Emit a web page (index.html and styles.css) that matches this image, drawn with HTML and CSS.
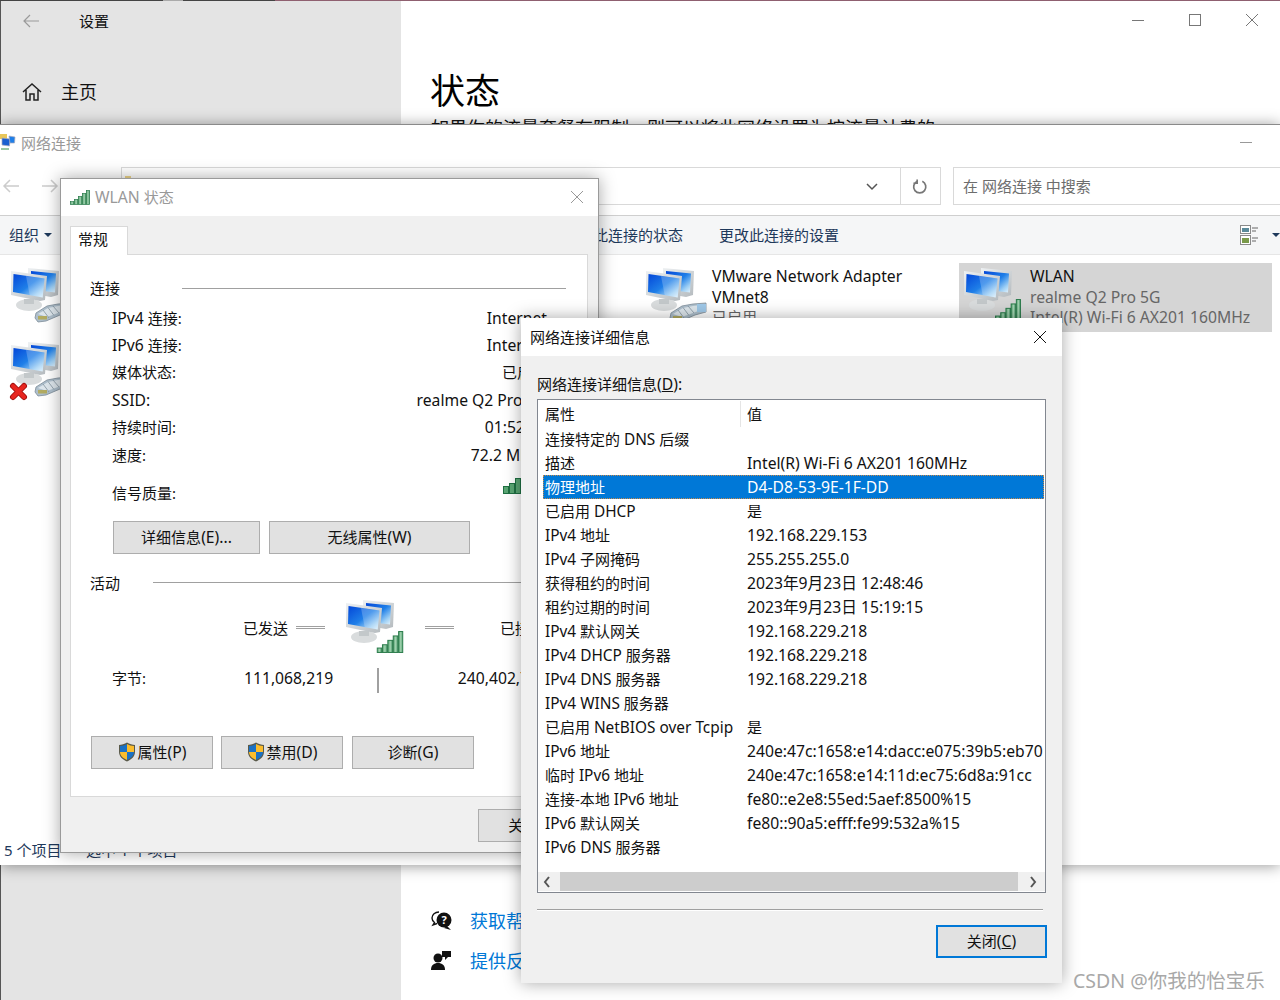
FILE: index.html
```html
<!DOCTYPE html>
<html lang="zh-CN">
<head>
<meta charset="utf-8">
<title>网络连接详细信息</title>
<link rel="stylesheet" href="styles.css">
</head>
<body>
<svg class="defs" aria-hidden="true">
  <defs>
    <linearGradient id="gScreen" x1="0" y1="0" x2="1" y2="1">
      <stop offset="0" stop-color="#0346d8"/><stop offset=".5" stop-color="#1f7fe8"/><stop offset=".8" stop-color="#9fd0f5"/><stop offset="1" stop-color="#e4f3fc"/>
    </linearGradient>
    <linearGradient id="gFrame" x1="0" y1="0" x2="1" y2="1">
      <stop offset="0" stop-color="#eef1f3"/><stop offset="1" stop-color="#b4babe"/>
    </linearGradient>
    <linearGradient id="gBar" x1="0" y1="0" x2="1" y2="0">
      <stop offset="0" stop-color="#4f9e6b"/><stop offset=".5" stop-color="#a4d4b2"/><stop offset="1" stop-color="#3f9160"/>
    </linearGradient>
    <symbol id="monitors" viewBox="0 0 60 56">
      <ellipse cx="18" cy="37" rx="13" ry="6" fill="#d9dcdd"/>
      <path d="M13 31h10v5H13z" fill="#c3c8ca"/>
      <path d="M17 0 48 3l-1 24-7 2-23-4z" fill="url(#gFrame)"/>
      <path d="M20 3 45 5.500l-1 19-24-3z" fill="url(#gScreen)"/>
      <path d="M0 3 36 8l-2 24-5 1L0 27z" fill="url(#gFrame)"/>
      <path d="M2.500 6 33.500 10.500l-1.800 19L2 24z" fill="url(#gScreen)"/>
      <path d="M15 8 33.500 10.500l-1.800 19-13-2.300z" fill="#fff" opacity=".22"/>
    </symbol>
    <symbol id="cable" viewBox="0 0 36 19" overflow="visible">
      <path d="M1 10 12 3l11-2 13-1v9L25 12 11 18 3 19 0 15z" fill="#aebfcc" stroke="#7c8c98" stroke-width=".8"/>
      <path d="M3 11 13 5l10-2 4-.5v6L12 14z" fill="#dde6ec"/>
      <path d="M8 7l6 8M13 4.500l6 8M18 3l6 7" stroke="#8494a0" stroke-width=".8" fill="none"/>
      <path d="M27 1h9v8h-9z" fill="#9fc8e8"/>
      <path d="M3 13h9v3.500H3z" fill="#b3ac62"/>
    </symbol>
    <symbol id="signal" viewBox="0 0 25 20" preserveAspectRatio="none">
      <g fill="url(#gBar)" stroke="#2a7a4a" stroke-width=".9">
        <rect x=".5" y="15.500" width="4.500" height="4"/>
        <rect x="5.500" y="12.500" width="4.500" height="7"/>
        <rect x="10.500" y="8.500" width="4.500" height="11"/>
        <rect x="15.500" y="4.500" width="4.500" height="15"/>
        <rect x="20.500" y=".5" width="4" height="19"/>
      </g>
    </symbol>
    <symbol id="shield" viewBox="0 0 18 20">
      <path d="M9 .5C6.500 2 3.500 3 1 3v7c0 4.500 3.500 7.500 8 9.500 4.500-2 8-5 8-9.500V3C14.500 3 11.500 2 9 .5z" fill="#5a5a4a"/>
      <path d="M9 2v8H2V4c2.500 0 5-1 7-2z" fill="#1b71c4"/>
      <path d="M9 2c2 1 4.500 2 7 2v6H9z" fill="#fbbd2c"/>
      <path d="M2 10h7v8c-4-1.800-7-4.300-7-8z" fill="#fbbd2c"/>
      <path d="M9 10h7c0 3.700-3 6.200-7 8z" fill="#1b71c4"/>
    </symbol>
  </defs>
</svg>

<main class="desk">
  <div class="strip"></div>

  <section class="win settings">
    <aside class="side">
      <div class="side-head">
        <svg class="ico-back" viewBox="0 0 16 14"><path d="M7 1 1 7l6 6M1 7h15" fill="none" stroke="#9a9a9a" stroke-width="1.200"/></svg>
        <span>设置</span>
      </div>
      <div class="side-home">
        <svg class="ico-home" viewBox="0 0 20 20"><path d="M1 10 10 2l9 8M4 8v10h4v-6h4v6h4V8" fill="none" stroke="#222" stroke-width="1.500"/></svg>
        <span>主页</span>
      </div>
    </aside>
    <div class="pane">
      <div class="caption-btns">
        <i class="cap-min"></i><i class="cap-max"></i>
        <svg class="cap-x" viewBox="0 0 12 12"><path d="M0 0 12 12M12 0 0 12" stroke="#777" fill="none"/></svg>
      </div>
      <h1>状态</h1>
      <p class="clip-text">如果你的流量套餐有限制，则可以将此网络设置为按流量计费的</p>
      <ul class="help">
        <li>
          <svg class="ico-help" viewBox="0 0 22 20"><path d="M8 1C4 1 1 3.500 1 7c0 2 1 3.500 2.500 4.500L2 14l4-1.500" fill="none" stroke="#111" stroke-width="1.400"/><circle cx="13" cy="9" r="7.500" fill="#111"/><path d="M16 15l4 4-7-2z" fill="#111"/><text x="13" y="13" text-anchor="middle" class="qmark">?</text></svg>
          <a>获取帮助</a>
        </li>
        <li>
          <svg class="ico-help" viewBox="0 0 22 20"><circle cx="7" cy="7" r="4.500" fill="#111"/><path d="M0 19c0-5 3-7 7-7s7 2 7 7z" fill="#111"/><path d="M11 0h9v6h-3l-3 3V6h-3z" fill="#111"/></svg>
          <a>提供反馈</a>
        </li>
      </ul>
    </div>
  </section>

  <section class="win net">
    <header class="net-title">
      <svg class="ico-net-small" viewBox="0 0 17 17"><path d="M0 0h7v5H0z" fill="#e8c65a"/><path d="M2 4l8 1-.5 7L2 11z" fill="#1a5fd0" stroke="#aab" stroke-width=".7"/><path d="M9 2l6 1-.5 6H10z" fill="#1f7fe8" stroke="#aab" stroke-width=".7"/><path d="M1 14h8v2H1z" fill="#9ac7a4"/></svg>
      <span>网络连接</span>
      <i class="net-min"></i>
    </header>
    <div class="net-nav">
      <svg class="nav-arrow" viewBox="0 0 16 14"><path d="M7 1 1 7l6 6M1 7h15" fill="none" stroke="#ccc" stroke-width="1.500"/></svg>
      <svg class="nav-arrow fwd" viewBox="0 0 16 14"><path d="M9 1l6 6-6 6M15 7H0" fill="none" stroke="#ccc" stroke-width="1.500"/></svg>
      <div class="addr">
        <i class="folder"></i>
        <svg class="chev" viewBox="0 0 12 7"><path d="M1 1l5 5 5-5" fill="none" stroke="#555" stroke-width="1.500"/></svg>
      </div>
      <div class="refresh">
        <svg viewBox="0 0 16 16"><path d="M5.500 2.500A6.500 6.500 0 1 0 11 2.500M5.500 .5v4h-4" fill="none" stroke="#777" stroke-width="1.800"/></svg>
      </div>
      <div class="search">在 网络连接 中搜索</div>
    </div>
    <div class="toolbar">
      <span class="tool org">组织</span><i class="tri"></i>
      <span class="tool view-state">查看此连接的状态</span>
      <span class="tool">更改此连接的设置</span>
      <svg class="ico-view" viewBox="0 0 18 20">
        <rect x=".5" y=".5" width="10" height="8" fill="#fff" stroke="#8a8a8a"/><rect x="2" y="3" width="7" height="4" fill="#5a8a9a"/><path d="M12 3h6M12 13h6M12 16h4M12 6h4" stroke="#666"/>
        <rect x=".5" y="10.500" width="10" height="9" fill="#fff" stroke="#8a8a8a"/><rect x="2" y="13" width="7" height="5" fill="#7a9a4a"/>
      </svg>
      <i class="tri tri-end"></i>
    </div>
    <div class="items">
      <div class="col-first">
        <div class="item">
          <svg class="ico-net" viewBox="0 0 60 56"><use href="#monitors"/><use href="#cable" x="24" y="35" width="36" height="19"/></svg>
        </div>
        <div class="item">
          <svg class="ico-net" viewBox="0 0 60 56"><use href="#monitors"/><use href="#cable" x="24" y="35" width="36" height="19"/><path d="M2 44l11 11M13 44 2 55" stroke="#a51210" stroke-width="6" stroke-linecap="round"/><path d="M2 44l11 11M13 44 2 55" stroke="#e8251f" stroke-width="4" stroke-linecap="round"/></svg>
        </div>
      </div>
      <div class="item item-wide">
        <svg class="ico-net" viewBox="0 0 60 56"><use href="#monitors"/><use href="#cable" x="24" y="35" width="36" height="19"/></svg>
        <div class="item-text">
          <div class="l">VMware Network Adapter</div>
          <div class="l">VMnet8</div>
          <div class="dim">已启用</div>
        </div>
      </div>
      <div class="item item-wide selected">
        <svg class="ico-net" viewBox="0 0 60 56"><use href="#monitors"/><use href="#signal" x="31" y="31" width="26" height="22"/></svg>
        <div class="item-text">
          <div class="l">WLAN</div>
          <div class="dim l">realme Q2 Pro 5G</div>
          <div class="dim l">Intel(R) Wi-Fi 6 AX201 160MHz</div>
        </div>
      </div>
    </div>
    <footer class="status"><span class="count">5 个项目</span><span>选中 1 个项目</span></footer>
  </section>

  <section class="win dlg wlan">
    <header class="dlg-title">
      <svg class="ico-title" viewBox="0 0 25 20" preserveAspectRatio="none"><use href="#signal"/></svg>
      <span class="dim-title"><span class="l">WLAN</span> 状态</span>
      <svg class="dlg-x" viewBox="0 0 12 12"><path d="M0 0 12 12M12 0 0 12" stroke="#999" fill="none"/></svg>
    </header>
    <div class="dlg-body">
      <div class="tab">常规</div>
      <div class="panel">
        <div class="group g1"><span class="group-name wide">连接</span><i class="rule"></i></div>
        <dl class="rows">
          <div class="row"><dt><span class="l">IPv4</span> 连接:</dt><dd class="l">Internet</dd></div>
          <div class="row"><dt><span class="l">IPv6</span> 连接:</dt><dd class="l">Internet</dd></div>
          <div class="row"><dt>媒体状态:</dt><dd>已启用</dd></div>
          <div class="row"><dt class="l">SSID:</dt><dd class="l">realme Q2 Pro 5G</dd></div>
          <div class="row"><dt>持续时间:</dt><dd class="l">01:52:36</dd></div>
          <div class="row"><dt>速度:</dt><dd class="l">72.2 Mbps</dd></div>
          <div class="row sig"><dt>信号质量:</dt><dd><svg class="ico-quality" viewBox="0 0 18 16"><g fill="#5aa673" stroke="#1f6f42"><rect x=".5" y="8.500" width="5" height="7"/><rect x="6.500" y="5.500" width="5" height="10"/><rect x="12.500" y=".5" width="5" height="15"/></g></svg></dd></div>
        </dl>
        <div class="btn-row">
          <button class="btn b-detail">详细信息<span class="l">(E)...</span></button>
          <button class="btn b-wireless">无线属性<span class="l">(W)</span></button>
        </div>
        <div class="group g2"><span class="group-name">活动</span><i class="rule"></i></div>
        <div class="act">
          <span>已发送</span><i class="dash"></i>
          <svg class="ico-net act-ico" viewBox="0 0 60 56"><use href="#monitors"/><use href="#signal" x="30.500" y="31" width="27" height="22"/></svg>
          <i class="dash"></i><span class="recv">已接收</span>
        </div>
        <div class="bytes">
          <span class="bytes-name">字节:</span><span class="bytes-sent l">111,068,219</span><i class="vbar"></i><span class="recv l">240,402,715</span>
        </div>
        <div class="btn-row bottom">
          <button class="btn b-act"><svg class="ico-shield" viewBox="0 0 18 20"><use href="#shield"/></svg>属性<span class="l">(P)</span></button>
          <button class="btn b-act"><svg class="ico-shield" viewBox="0 0 18 20"><use href="#shield"/></svg>禁用<span class="l">(D)</span></button>
          <button class="btn b-act b-last">诊断<span class="l">(G)</span></button>
        </div>
      </div>
      <div class="dlg-foot"><button class="btn b-close">关闭<span class="l">(C)</span></button></div>
    </div>
  </section>

  <section class="win dlg details">
    <header class="dlg-title det-title">
      <span>网络连接详细信息</span>
      <svg class="dlg-x" viewBox="0 0 12 12"><path d="M0 0 12 12M12 0 0 12" stroke="#111" fill="none"/></svg>
    </header>
    <div class="det-body">
      <div class="det-label">网络连接详细信息<span class="l">(<u>D</u>):</span></div>
      <div class="listbox">
        <div class="list-head"><span class="cell-name">属性</span><i class="head-sep"></i><span>值</span></div>
        <div class="list-rows">
          <div class="lr"><span class="cell-name">连接特定的 <span class="l">DNS</span> 后缀</span><span></span></div>
          <div class="lr"><span class="cell-name">描述</span><span class="l">Intel(R) Wi-Fi 6 AX201 160MHz</span></div>
          <div class="lr sel"><span class="cell-name">物理地址</span><span class="l">D4-D8-53-9E-1F-DD</span></div>
          <div class="lr"><span class="cell-name">已启用 <span class="l">DHCP</span></span><span>是</span></div>
          <div class="lr"><span class="cell-name"><span class="l">IPv4</span> 地址</span><span class="l">192.168.229.153</span></div>
          <div class="lr"><span class="cell-name"><span class="l">IPv4</span> 子网掩码</span><span class="l">255.255.255.0</span></div>
          <div class="lr"><span class="cell-name">获得租约的时间</span><span class="l">2023年9月23日 12:48:46</span></div>
          <div class="lr"><span class="cell-name">租约过期的时间</span><span class="l">2023年9月23日 15:19:15</span></div>
          <div class="lr"><span class="cell-name"><span class="l">IPv4</span> 默认网关</span><span class="l">192.168.229.218</span></div>
          <div class="lr"><span class="cell-name"><span class="l">IPv4 DHCP</span> 服务器</span><span class="l">192.168.229.218</span></div>
          <div class="lr"><span class="cell-name"><span class="l">IPv4 DNS</span> 服务器</span><span class="l">192.168.229.218</span></div>
          <div class="lr"><span class="cell-name"><span class="l">IPv4 WINS</span> 服务器</span><span></span></div>
          <div class="lr"><span class="cell-name">已启用 <span class="l">NetBIOS over Tcpip</span></span><span>是</span></div>
          <div class="lr"><span class="cell-name"><span class="l">IPv6</span> 地址</span><span class="l">240e:47c:1658:e14:dacc:e075:39b5:eb70</span></div>
          <div class="lr"><span class="cell-name">临时 <span class="l">IPv6</span> 地址</span><span class="l">240e:47c:1658:e14:11d:ec75:6d8a:91cc</span></div>
          <div class="lr"><span class="cell-name">连接-本地 <span class="l">IPv6</span> 地址</span><span class="l">fe80::e2e8:55ed:5aef:8500%15</span></div>
          <div class="lr"><span class="cell-name"><span class="l">IPv6</span> 默认网关</span><span class="l">fe80::90a5:efff:fe99:532a%15</span></div>
          <div class="lr"><span class="cell-name"><span class="l">IPv6 DNS</span> 服务器</span><span></span></div>
        </div>
        <div class="hscroll">
          <svg class="sb-arrow" viewBox="0 0 8 12"><path d="M6 1 2 6l4 5" fill="none" stroke="#555" stroke-width="2"/></svg>
          <i class="sb-thumb"></i>
          <svg class="sb-arrow" viewBox="0 0 8 12"><path d="M2 1l4 5-4 5" fill="none" stroke="#555" stroke-width="2"/></svg>
        </div>
      </div>
      <div class="det-sep"></div>
      <div class="det-foot"><button class="btn b-default">关闭<span class="l">(<u>C</u>)</span></button></div>
    </div>
  </section>

  <div class="watermark">CSDN @你我的怡宝乐</div>
</main>
</body>
</html>
```
FILE: styles.css
```css
* { box-sizing: border-box; }
html, body { margin: 0; padding: 0; background: #fff; }
body {
  width: 1280px;
  height: 1000px;
  overflow: hidden;
  font: 15px/20px "Noto Sans", "Noto Sans CJK SC", sans-serif;
  color: #111;
}
.l { font-size: 15.700px; }
.cell-name .l { font-size: 15.400px; }
.defs { position: absolute; width: 0; height: 0; }
i { display: block; font-style: normal; }
svg { display: block; overflow: visible; flex: none; }

.desk { position: relative; width: 1280px; height: 1000px; overflow: hidden; }
.strip {
  position: absolute; left: 0; top: 0; width: 1280px; height: 1px; z-index: 9;
  background: linear-gradient(90deg, #444 0 163px, #aaa 163px 183px, #444 183px 275px, #8f6070 275px);
}
.win { position: absolute; }

/* settings */
.settings { left: 0; top: 0; width: 1280px; height: 1000px; display: flex; background: #fff; z-index: 1; }
.side { width: 401px; background: #e4e4e4; border-left: 1px solid #555; padding-top: 1px; }
.side-head { display: flex; align-items: center; height: 40px; padding-left: 22px; }
.ico-back { width: 16px; height: 14px; margin-right: 40px; }
.side-home { display: flex; align-items: center; margin-top: 31px; height: 40px; padding-left: 21px; font-size: 18px; }
.ico-home { width: 20px; height: 20px; margin-right: 19px; }
.pane { flex: 1; position: relative; padding-left: 30px; }
.caption-btns { display: flex; align-items: center; justify-content: flex-end; height: 40px; padding-right: 22px; }
.cap-min { width: 12px; height: 1px; background: #777; margin-right: 45px; }
.cap-max { width: 12px; height: 12px; border: 1px solid #777; margin-right: 45px; }
.cap-x { width: 12px; height: 12px; }
h1 { margin: 26px 0 0 -1px; font-size: 35px; font-weight: 400; line-height: 50px; color: #000; }
.clip-text { margin: 0; font-size: 18px; line-height: 24px; white-space: nowrap; color: #111; }
.help { list-style: none; margin: 0; padding: 0; position: absolute; left: 30px; top: 901px; }
.help li { display: flex; align-items: center; height: 40px; }
.ico-help { width: 22px; height: 20px; margin-right: 17px; }
.help a { color: #0078d7; font-size: 18px; }
.qmark { font: 700 11px "Noto Sans", sans-serif; fill: #fff; }

/* network connections window */
.net {
  left: 0; top: 124px; width: 1280px; height: 741px; background: #fff; z-index: 2;
  border-top: 1px solid #8a8a8a; display: flex; flex-direction: column;
  box-shadow: 0 1px 14px rgba(0,0,0,.4);
}
.net-title { display: flex; align-items: center; height: 42px; padding-bottom: 7px; color: #999; }
.ico-net-small { width: 17px; height: 17px; margin-right: 4px; }
.net-min { width: 12px; height: 1px; background: #999; margin-left: auto; margin-right: 28px; }
.net-nav { display: flex; align-items: center; height: 38px; }
.nav-arrow { width: 16px; height: 14px; margin-left: 3px; }
.nav-arrow.fwd { margin-left: 23px; margin-right: 63px; }
.addr { width: 779px; height: 38px; border: 1px solid #d9d9d9; border-right: 0; display: flex; align-items: center; position: relative; }
.folder { position: absolute; left: 3px; top: 8px; width: 6px; height: 6px; background: #eed58a; }
.chev { width: 12px; height: 7px; margin-left: auto; margin-right: 22px; }
.refresh { width: 41px; height: 38px; padding-right: 2px; border: 1px solid #d9d9d9; display: flex; align-items: center; justify-content: center; }
.refresh svg { width: 15px; height: 15px; }
.search { flex: 1; height: 38px; margin-left: 12px; border: 1px solid #d9d9d9; border-right: 0; padding-left: 9px; line-height: 36px; color: #6d6d6d; }
.toolbar {
  display: flex; align-items: center; height: 40px; margin-top: 10px; padding-left: 9px;
  background: #f5f6f7; border-top: 1px solid #cfcfcf; border-bottom: 1px solid #e6e6e6; color: #1e395b;
}
.tri { width: 0; height: 0; margin-left: 5px; border: 4px solid transparent; border-top: 4px solid #1e395b; border-bottom: 0; }
.view-state { margin-left: 511px; margin-right: 36px; }
.ico-view { width: 18px; height: 20px; margin-left: auto; }
.tri-end { margin-left: 14px; margin-right: 0; }
.items { flex: 1; display: flex; min-height: 0; }
.col-first { width: 641px; padding: 13px 0 0 11px; }
.col-first .item { height: 74px; }
.item { display: flex; }
.ico-net { width: 60px; height: 56px; }
.item-wide { margin-top: 8px; height: 69px; padding: 5px 0 0 5px; }
.item-wide:not(.selected) { width: 318px; }
.selected { width: 313px; background: #d5d5d5; }
.item-text { margin: -2px 0 0 6px; line-height: 20.600px; white-space: nowrap; }
.dim { color: #666; }
.status { display: flex; height: 27px; padding: 3px 0 0 4px; color: #1e395b; line-height: 18px; }
.count { width: 82px; }

/* dialogs */
.dlg { background: #f0f0f0; box-shadow: 0 0 16px rgba(0,0,0,.35); display: flex; flex-direction: column; }
.wlan { left: 60px; top: 178px; width: 539px; height: 675px; border: 1px solid #9a9a9a; z-index: 3; }
.dlg-title { display: flex; align-items: center; height: 37px; background: #fff; padding: 0 0 1px 9px; flex: none; }
.ico-title { width: 20px; height: 15px; margin-right: 5px; }
.dim-title { color: #999; }
.dlg-x { width: 12px; height: 12px; margin-left: auto; margin-right: 15px; }
.dlg-body { flex: 1; padding: 10px 10px 0 9px; }
.tab {
  width: 58px; height: 29px; padding: 2px 0 0 7px; background: #fff; position: relative; margin-bottom: -1px; z-index: 1;
  border: 1px solid #d9d9d9; border-bottom: 0;
}
.panel { height: 543px; background: #fff; border: 1px solid #d9d9d9; padding: 23px 21px 0 19px; }
.group { display: flex; align-items: center; height: 20px; }
.group-name { width: 63px; flex: none; }
.group-name.wide { width: 92px; }
.rule { flex: 1; height: 1px; background: #a0a0a0; margin-top: -2px; }
.g1 .rule { margin-top: 0; }
.rows { margin: 6px 19px 0 22px; }
.row { display: flex; justify-content: space-between; align-items: center; height: 27.400px; }
dt, dd { margin: 0; }
.sig { margin-top: 10.600px; }
.ico-quality { width: 18px; height: 16px; margin-right: 26px; margin-top: -14px; }
.btn {
  font: inherit; color: #111; background: #e1e1e1; border: 1px solid #adadad; height: 33px; padding: 0 0 2px;
  display: flex; align-items: center; justify-content: center;
}
.btn-row { display: flex; margin: 15px 0 0 23px; gap: 9px; }
.b-detail { width: 147px; }
.b-wireless { width: 201px; }
.g2 { margin-top: 19px; }
.act { display: flex; align-items: center; height: 53px; margin-top: 8px; padding: 0 21px 0 153px; }
.dash { width: 29px; height: 3px; border: 1px solid #a0a0a0; border-left: 0; border-right: 0; margin-left: 8px; background: #fff; }
.act-ico { margin-left: 21px; margin-right: -3px; }
.act .dash + .recv { margin-left: auto; }
.act-ico + .dash { margin-left: 22px; }
.bytes { display: flex; height: 25px; margin-top: 14px; padding: 0 19px 0 22px; }
.bytes-name { width: 132px; }
.bytes-sent { width: 133px; }
.vbar { width: 2px; background: #a0a0a0; }
.bytes .recv { margin-left: auto; }
.bottom { margin: 43px 0 0 1px; gap: 8px; }
.b-act { width: 122px; }
.b-last { margin-left: 1px; }
.ico-shield { width: 18px; height: 20px; margin-right: 2px; }
.dlg-foot { display: flex; justify-content: flex-end; margin-top: 12px; }
.b-close { width: 110px; }

.details { left: 521px; top: 318px; width: 541px; height: 665px; z-index: 4; }
.det-title { height: 38px; padding-left: 9px; }
.det-title .dlg-x { margin-right: 16px; }
.det-body { flex: 1; padding: 18px 15px 0 16px; }
.det-label { height: 20px; }
.listbox { margin-top: 5px; width: 509px; height: 494px; border: 1px solid #828790; background: #fff; overflow: hidden; display: flex; flex-direction: column; }
.list-head { display: flex; align-items: center; height: 27px; flex: none; }
.list-head .cell-name { width: 209px; }
.cell-name { width: 204px; padding-left: 7px; flex: none; white-space: nowrap; }
.head-sep { width: 1px; height: 26px; background: #e5e5e5; margin-left: -7px; margin-right: 6px; }
.list-rows { flex: 1; min-height: 0; }
.lr { display: flex; align-items: center; height: 24px; margin: 0 1px 0 5px; white-space: nowrap; overflow: hidden; }
.lr .cell-name { padding-left: 2px; }
.lr.sel { background: #0078d7; color: #fff; outline: 1px dotted #c98a4a; outline-offset: -1px; }
.hscroll { display: flex; align-items: center; height: 19px; margin-bottom: 1px; flex: none; background: #f0f0f0; }
.sb-arrow { width: 8px; height: 12px; margin: 0 7px; }
.sb-thumb { flex: 1; height: 19px; background: #cdcdcd; }
.sb-arrow:first-child { margin: 0 8px 0 4px; width: 10px; }
.sb-arrow:last-child { margin: 0 8px 0 11px; }
.det-sep { width: 506px; height: 2px; margin-top: 16px; background: #a0a0a0; border-bottom: 1px solid #fff; }
.det-foot { display: flex; justify-content: flex-end; margin-top: 14px; width: 510px; }
.b-default { width: 111px; height: 33px; border: 2px solid #0078d7; }

.watermark { position: absolute; left: 1073px; top: 969px; z-index: 9; font-size: 19.500px; line-height: 24px; color: #a8a8a8; white-space: nowrap; }
```
